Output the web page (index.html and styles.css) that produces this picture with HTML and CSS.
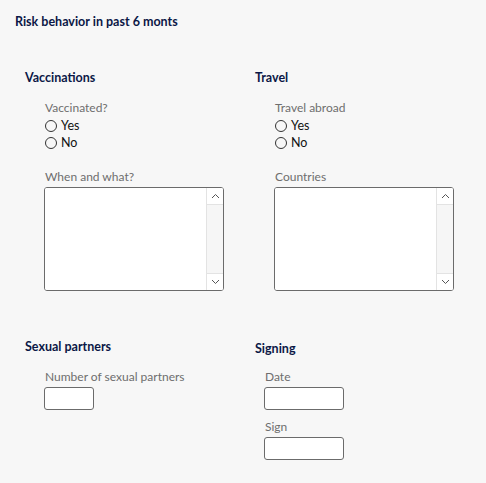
FILE: index.html
```html
<!DOCTYPE html>
<html>
<head>
<meta charset="utf-8">
<link rel="stylesheet" href="styles.css">
</head>
<body>
<div class="page">
  <h1 class="title">Risk behavior in past 6 monts</h1>
  <div class="grid top">
    <section class="col">
      <h2 class="head">Vaccinations</h2>
      <div class="fields">
        <div class="label">Vaccinated?</div>
        <label class="radio"><span class="dot"></span>Yes</label>
        <label class="radio"><span class="dot"></span>No</label>
        <div class="label gap">When and what?</div>
        <div class="tabox">
          <textarea class="ta"></textarea>
          <div class="sb">
            <div class="sbtn"><svg width="9" height="6" viewBox="0 0 9 6"><path d="M1 5 L4.5 1.5 L8 5" fill="none" stroke="#555" stroke-width="1"/></svg></div>
            <div class="track"></div>
            <div class="sbtn"><svg width="9" height="6" viewBox="0 0 9 6"><path d="M1 1 L4.5 4.5 L8 1" fill="none" stroke="#555" stroke-width="1"/></svg></div>
          </div>
        </div>
      </div>
    </section>
    <section class="col">
      <h2 class="head">Travel</h2>
      <div class="fields">
        <div class="label">Travel abroad</div>
        <label class="radio"><span class="dot"></span>Yes</label>
        <label class="radio"><span class="dot"></span>No</label>
        <div class="label gap">Countries</div>
        <div class="tabox">
          <textarea class="ta"></textarea>
          <div class="sb">
            <div class="sbtn"><svg width="9" height="6" viewBox="0 0 9 6"><path d="M1 5 L4.5 1.5 L8 5" fill="none" stroke="#555" stroke-width="1"/></svg></div>
            <div class="track"></div>
            <div class="sbtn"><svg width="9" height="6" viewBox="0 0 9 6"><path d="M1 1 L4.5 4.5 L8 1" fill="none" stroke="#555" stroke-width="1"/></svg></div>
          </div>
        </div>
      </div>
    </section>
  </div>
  <div class="grid bottom">
    <section class="col">
      <h2 class="head">Sexual partners</h2>
      <div class="fields">
        <div class="label">Number of sexual partners</div>
        <input class="inp small" type="text">
      </div>
    </section>
    <section class="col sign">
      <h2 class="head">Signing</h2>
      <div class="fields narrow">
        <div class="label">Date</div>
        <input class="inp mid" type="text">
        <div class="label gap2">Sign</div>
        <input class="inp mid" type="text">
      </div>
    </section>
  </div>
</div>
</body>
</html>
```
FILE: styles.css
```css
html, body {
  margin: 0;
  padding: 0;
  background: #f7f7f7;
}
body {
  font-family: Lato, "Noto Sans", sans-serif;
  font-size: 12px;
  line-height: 16px;
  color: #111;
  width: 486px;
  height: 483px;
  overflow: hidden;
}
.page {
  padding: 14px 0 0 15px;
}
.title {
  margin: 0;
  font-size: 12.5px;
  line-height: 16px;
  font-weight: 700;
  color: #0b1746;
}
.grid {
  display: grid;
  grid-template-columns: 230px 230px;
  padding-left: 10px;
}
.top {
  margin-top: 40px;
}
.bottom {
  margin-top: 48px;
}
.head {
  margin: 0;
  font-size: 12.5px;
  line-height: 16px;
  font-weight: 700;
  color: #0b1746;
}
.sign .head {
  margin-top: 2px;
}
.fields {
  padding-left: 20px;
  margin-top: 14px;
  display: flex;
  flex-direction: column;
  align-items: flex-start;
}
.sign .fields {
  padding-left: 10px;
  margin-top: 12px;
}
.label {
  color: #6e6e6e;
  height: 17px;
}
.label.gap {
  margin-top: 18px;
}
.label.gap2 {
  margin-top: 9px;
}
.radio {
  display: flex;
  align-items: center;
  height: 17px;
  color: #111;
  gap: 4px;
  font-size: 12.5px;
}
.dot {
  width: 10px;
  height: 10px;
  border: 1px solid #333;
  border-radius: 50%;
  box-sizing: content-box;
}
.tabox {
  margin: 1px 0 0 -1px;
  width: 178px;
  height: 102px;
  border: 1px solid #6b6b6b;
  border-radius: 3px;
  background: #fff;
  display: flex;
  overflow: hidden;
}
.ta {
  flex: 1;
  border: 0;
  resize: none;
  background: #fff;
  margin: 0;
  padding: 0;
  outline: none;
}
.sb {
  width: 16px;
  border-left: 1px solid #e3e3e3;
  display: flex;
  flex-direction: column;
  background: #f6f6f6;
}
.sbtn {
  height: 16px;
  display: flex;
  align-items: center;
  justify-content: center;
  background: #fff;
}
.sbtn:first-child {
  border-bottom: 1px solid #e3e3e3;
}
.sbtn:last-child {
  border-top: 1px solid #e3e3e3;
}
.track {
  flex: 1;
}
.inp {
  margin: 1px 0 0 -1px;
  height: 23px;
  box-sizing: border-box;
  border: 1px solid #6b6b6b;
  border-radius: 3px;
  background: #fff;
  padding: 0 3px;
  font: inherit;
}
.inp.small {
  width: 50px;
}
.inp.mid {
  width: 80px;
}
```
